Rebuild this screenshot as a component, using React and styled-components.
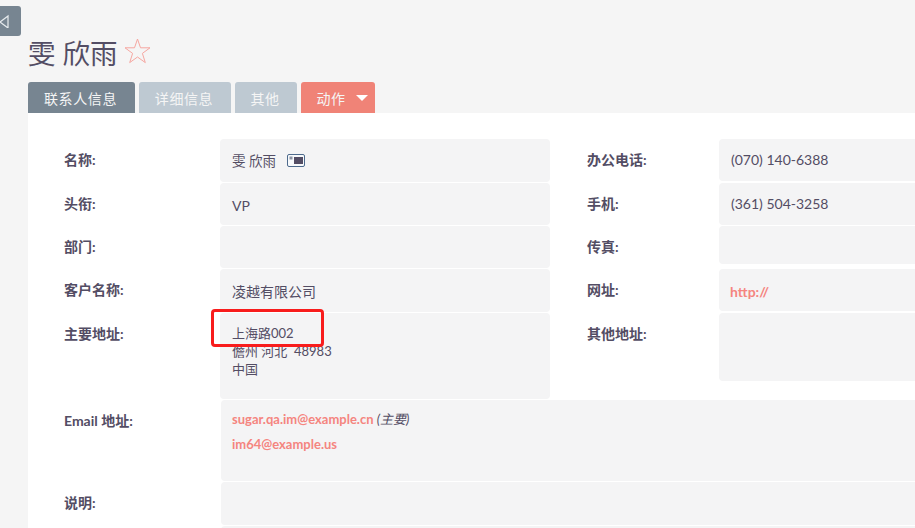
import React from "react";
import styled, { createGlobalStyle } from "styled-components";

const FONT = `Lato, "Noto Sans CJK SC", sans-serif`;

const Global = createGlobalStyle`
  html, body { margin: 0; padding: 0; height: 528px; overflow: hidden; background: #f5f5f5; }
  body { font-family: ${FONT}; color: #534d64; }
`;

const Page = styled.div`
  position: relative;
  width: 915px;
  height: 528px;
  overflow: hidden;
  padding: 36px 0 0 28px;
  box-sizing: border-box;
`;
const SideToggle = styled.div`
  position: absolute;
  left: 0;
  top: 6px;
  width: 21px;
  height: 30px;
  background: #778591;
  border-radius: 0 3px 3px 0;
  display: flex;
  align-items: center;
`;
const TitleRow = styled.div`
  display: flex;
  align-items: center;
  height: 35px;
  gap: 6px;
  margin-bottom: 11px;
`;
const Title = styled.h2`
  margin: 0;
  font-size: 27.5px;
  font-weight: 400;
  line-height: 35px;
  color: #534d64;
`;
const Star = styled.svg`
  margin-bottom: 6px;
`;
const Tabs = styled.div`
  display: flex;
  gap: 4px;
  align-items: flex-start;
`;
const Tab = styled.div`
  height: ${p => (p.$kind === "action" ? 31 : 32)}px;
  width: ${p => p.$w}px;
  box-sizing: border-box;
  display: flex;
  align-items: center;
  justify-content: center;
  gap: 10px;
  font-size: 14px;
  letter-spacing: 0.6px;
  padding: ${p => (p.$kind === "action" ? "0 0 0 8px" : "0 2px 0 0")};
  color: #f5f5f5;
  border-radius: 3px 3px 0 0;
  background: ${p =>
    p.$kind === "active" ? "#778591" : p.$kind === "action" ? "#f08377" : "#bec9d2"};
`;
const Caret = styled.span`
  width: 0;
  height: 0;
  border-left: 6px solid transparent;
  border-right: 6px solid transparent;
  border-top: 6px solid #fff;
`;
const Panel = styled.div`
  background: #fff;
  padding: 26px 0 0 36px;
  height: 415px;
  box-sizing: border-box;
  margin-top: -1px;
  position: relative;
`;
const Row = styled.div`
  display: flex;
  align-items: flex-start;
  margin-bottom: 1px;
`;
const Label = styled.div`
  flex: none;
  width: ${p => p.$w}px;
  margin-left: ${p => p.$ml || 0}px;
  font-size: 14px;
  font-weight: 700;
  line-height: 18px;
  padding-top: ${p => p.$pt ?? 12}px;
  color: #534d64;
  box-sizing: border-box;
`;
const Value = styled.div`
  flex: none;
  width: ${p => p.$w}px;
  height: ${p => p.$h}px;
  margin-left: ${p => p.$ml || 0}px;
  background: #f4f4f5;
  border-radius: 4px;
  box-sizing: border-box;
  padding: ${p => p.$pt ?? 13}px 12px 0 ${p => p.$pl ?? 12}px;
  font-size: 14px;
  line-height: 18px;
  color: #534d64;
  white-space: nowrap;
`;
const NameText = styled.span`
  font-size: 13.5px;
`;
const LinkText = styled.div`
  color: #f5857f;
  font-size: ${p => p.$size || 13}px;
  font-weight: 700;
  line-height: 18px;
  margin-bottom: ${p => p.$mb || 0}px;
`;
const Primary = styled.em`
  color: #534d64;
  font-weight: 400;
  font-size: 13px;
`;
const Address = styled.div`
  line-height: 18px;
  font-size: 13px;
`;
const CardIcon = styled.svg`
  margin-left: 11px;
  vertical-align: -1px;
`;
const Marker = styled.div`
  position: absolute;
  left: 211px;
  top: 309px;
  width: 113px;
  height: 38px;
  box-sizing: border-box;
  border: 3px solid #f81c1c;
  border-radius: 4px;
  pointer-events: none;
`;

const LEFT_W = 330;
const RIGHT_W = 240;

export default function App() {
  return (
    <>
      <Global />
      <Page>
        <SideToggle>
          <svg width="10" height="14" viewBox="0 0 10 14">
            <path d="M8 2 L0 8 L8 14 Z" fill="none" stroke="#e8ecef" strokeWidth="1.2" />
          </svg>
        </SideToggle>
        <TitleRow>
          <Title>雯 欣雨</Title>
          <Star width="27" height="26" viewBox="0 0 27 26">
            <path
              d="M13.5 1 L16.5 9.8 L26 9.8 L18.4 15.4 L21.3 24.6 L13.5 19 L5.7 24.6 L8.6 15.4 L1 9.8 L10.5 9.8 Z"
              fill="none"
              stroke="#f6a6a0"
              strokeWidth="1"
            />
          </Star>
        </TitleRow>
        <Tabs>
          <Tab $kind="active" $w={107}>联系人信息</Tab>
          <Tab $w={92}>详细信息</Tab>
          <Tab $w={62}>其他</Tab>
          <Tab $kind="action" $w={74}>动作<Caret /></Tab>
        </Tabs>
        <Panel>
          <Row>
            <Label $w={156}>名称:</Label>
            <Value $w={LEFT_W} $h={43} $pt={13}>
              <NameText>雯 欣雨</NameText>
              <CardIcon width="18" height="13" viewBox="0 0 18 13">
                <rect x="0.5" y="0.5" width="17" height="12" rx="1.5" fill="#f7f9fb" stroke="#4d6a8c" />
                <rect x="2.5" y="2.5" width="3" height="3" fill="#8c93a3" />
                <rect x="7" y="3" width="9" height="7" fill="#534d64" />
              </CardIcon>
            </Value>
            <Label $w={132} $ml={37}>办公电话:</Label>
            <Value $w={RIGHT_W} $h={42} $pt={12}>(070) 140-6388</Value>
          </Row>
          <Row>
            <Label $w={156}>头衔:</Label>
            <Value $w={LEFT_W} $h={42} $pt={14}>VP</Value>
            <Label $w={132} $ml={37}>手机:</Label>
            <Value $w={RIGHT_W} $h={42} $pt={12}>(361) 504-3258</Value>
          </Row>
          <Row>
            <Label $w={156}>部门:</Label>
            <Value $w={LEFT_W} $h={42} />
            <Label $w={132} $ml={37}>传真:</Label>
            <Value $w={RIGHT_W} $h={38} />
          </Row>
          <Row>
            <Label $w={156}>客户名称:</Label>
            <Value $w={LEFT_W} $h={43} $pt={14}>凌越有限公司</Value>
            <Label $w={132} $ml={37}>网址:</Label>
            <Value $w={RIGHT_W} $h={42} $pt={14} $pl={11}>
              <LinkText $size={14}>http://</LinkText>
            </Value>
          </Row>
          <Row>
            <Label $w={156}>主要地址:</Label>
            <Value $w={LEFT_W} $h={86} $pt={11}>
              <Address>
                上海路002
                <br />
                儋州 河北&nbsp;&nbsp;48983
                <br />
                中国
              </Address>
            </Value>
            <Label $w={132} $ml={37}>其他地址:</Label>
            <Value $w={RIGHT_W} $h={68} />
          </Row>
          <Row>
            <Label $w={156}>Email 地址:</Label>
            <Value $w={700} $h={81} $pt={10} $pl={11} $ml={1}>
              <LinkText $mb={7}>
                sugar.qa.im@example.cn <Primary>(主要)</Primary>
              </LinkText>
              <LinkText>im64@example.us</LinkText>
            </Value>
          </Row>
          <Row>
            <Label $w={156}>说明:</Label>
            <Value $w={700} $h={43} $ml={1} />
          </Row>
          <Row>
            <Label $w={156} />
            <Value $w={700} $h={43} $ml={1} />
          </Row>
        </Panel>
        <Marker />
      </Page>
    </>
  );
}
